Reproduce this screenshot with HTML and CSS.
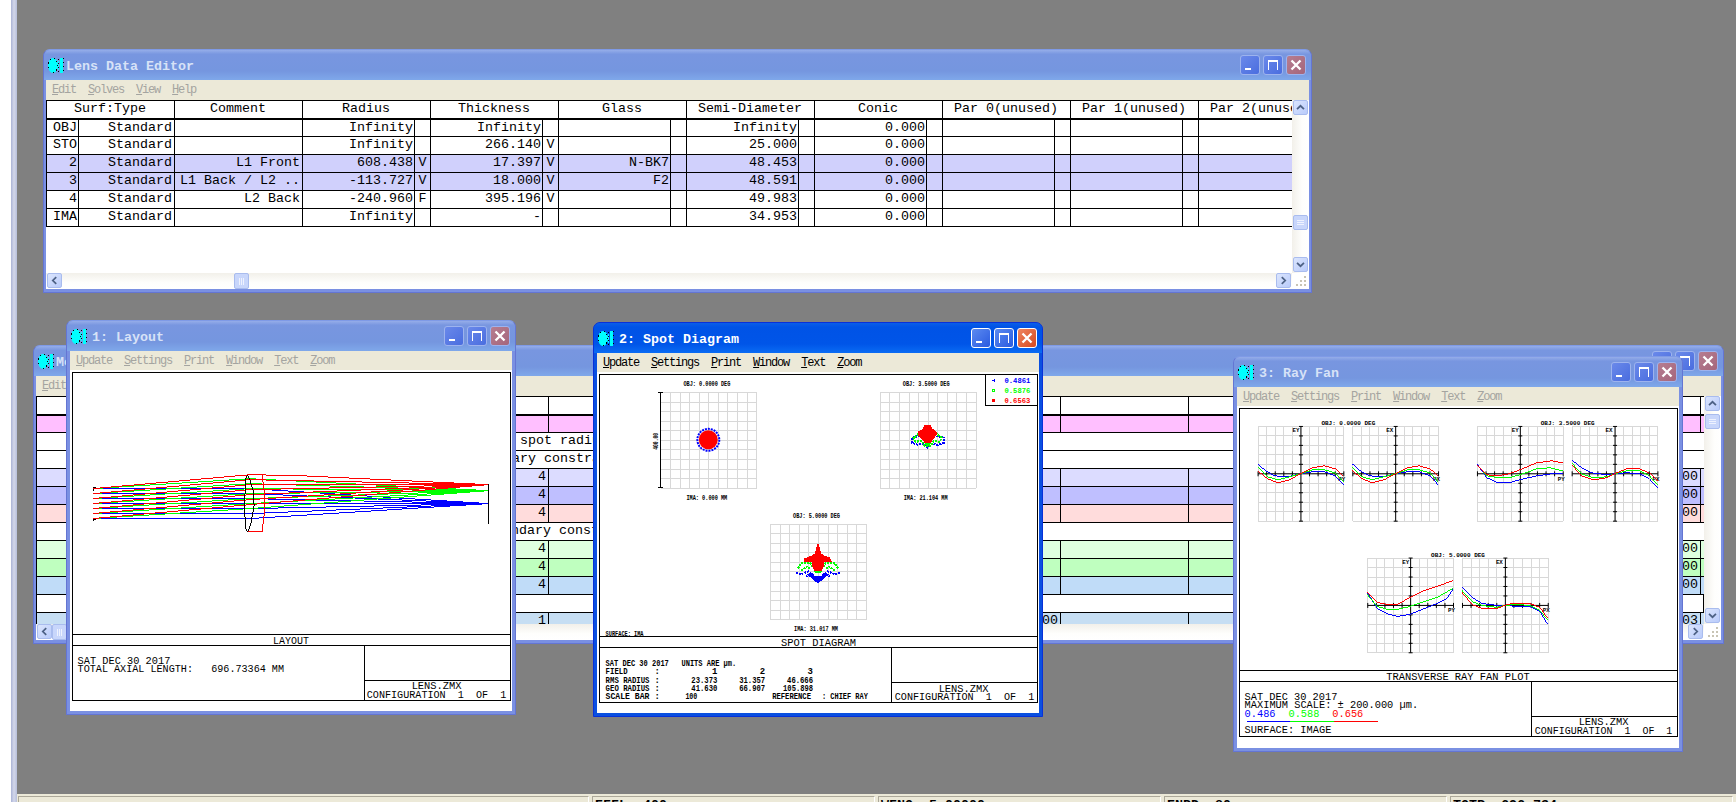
FILE: index.html

```html
<!DOCTYPE html>
<html lang="en">
<head>
  <meta charset="UTF-8" />
  <title>Lens</title>
  <link rel="stylesheet" href="styles.css">
</head>
<body>

  <svg class="defs" width="0" height="0">
    <symbol id="zmx" viewBox="0 0 16 15">
      <ellipse class="cy" cx="5" cy="7.5" rx="5" ry="7.5" />
      <path class="cy" d="M10,3H11V12H10ZM12,0H15V15H12Z" />
      <ellipse class="dots" cx="5" cy="7.5" rx="4.5" ry="7" />
      <path class="dots" d="M10.5,1V15M15.5,0V15" />
    </symbol>
    <symbol id="min" viewBox="0 0 20 20"><path class="wf" d="M4,13H11V16H4Z" /></symbol>
    <symbol id="max" viewBox="0 0 20 20"><path class="wf" d="M4,4H15V16H4ZM5,7V15H14V7Z" /></symbol>
    <symbol id="close" viewBox="0 0 20 20"><path class="ws" d="M5,5L15,15M15,5L5,15" /></symbol>
    <symbol id="up" viewBox="0 0 15 15"><path class="chev" d="M3.5,9.5L7.5,5.5L11.5,9.5" /></symbol>
    <symbol id="down" viewBox="0 0 15 15"><path class="chev" d="M3.5,5.5L7.5,9.5L11.5,5.5" /></symbol>
    <symbol id="left" viewBox="0 0 15 15"><path class="chev" d="M9.5,3.5L5.5,7.5L9.5,11.5" /></symbol>
    <symbol id="right" viewBox="0 0 15 15"><path class="chev" d="M5.5,3.5L9.5,7.5L5.5,11.5" /></symbol>
    <symbol id="gripper" viewBox="0 0 17 16"><path class="griptex" d="M12,3h2v2h-2zM8,7h2v2H8zM12,7h2v2h-2zM4,11h2v2H4zM8,11h2v2H8zM12,11h2v2h-2z" /></symbol>
    <g id="spotgrid">
      <path class="gridline" d="M0,0V96M9.6,0V96M19.2,0V96M28.8,0V96M38.4,0V96M48,0V96M57.6,0V96M67.2,0V96M76.8,0V96M86.4,0V96M96,0V96M0,0H96M0,9.6H96M0,19.2H96M0,28.8H96M0,38.4H96M0,48H96M0,57.6H96M0,67.2H96M0,76.8H96M0,86.4H96M0,96H96" />
    </g>
    <g id="fan">
      <path class="gridline" d="M0,0V95M8.6,0V95M17.2,0V95M25.8,0V95M34.4,0V95M43,0V95M51.6,0V95M60.2,0V95M68.8,0V95M77.4,0V95M86,0V95M0,0H86M0,9.5H86M0,19H86M0,28.5H86M0,38H86M0,47.5H86M0,57H86M0,66.5H86M0,76H86M0,85.5H86M0,95H86" />
      <path class="ink" d="M43,0V95M0,47.5H86M41,0H45M41,9.5H45M41,19H45M41,28.5H45M41,38H45M41,57H45M41,66.5H45M41,76H45M41,85.5H45M41,95H45M0,45V50M8.6,45V50M17.2,45V50M25.8,45V50M34.4,45V50M51.6,45V50M60.2,45V50M68.8,45V50M77.4,45V50M86,45V50" />
    </g>
  </svg>

  <div class="side"></div>

  <div class="main">
    <div class="desktop"></div>
    <div class="status">
      <div class="pane pane-wide"></div>
      <div class="pane">EFFL: 400</div>
      <div class="pane">WFNO: 5.00000</div>
      <div class="pane">ENPD: 80</div>
      <div class="pane">TOTR: 696.734</div>
    </div>
  </div>

  <!-- merit function editor, mostly hidden behind the analysis windows -->
  <div class="win win-merit">
    <div class="title">
      <svg class="ico"><use href="#zmx" /></svg>
      <span class="caption">Merit Function Editor</span>
      <div class="btns">
        <span class="btn"><svg><use href="#min" /></svg></span>
        <span class="btn"><svg><use href="#max" /></svg></span>
        <span class="btn btn-close"><svg><use href="#close" /></svg></span>
      </div>
    </div>
    <div class="menu menu-tall"><span><u>E</u>dit</span></div>
    <div class="client">
      <div class="sheet">
        <table class="grid grid-merit">
          <colgroup><col class="w512"><col class="w512"><col class="w128"><col class="w128"><col class="w128"><col class="w128"><col class="w128"><col class="w3"></colgroup>
          <tr class="head"><th></th><th></th><th></th><th></th><th></th><th></th><th></th><th class="tail"></th></tr>
          <tr class="first pink"><td></td><td></td><td></td><td></td><td></td><td></td><td></td><td class="tail"></td></tr>
          <tr><td colspan="8" class="note note-a">Sequential merit function: RMS spot radius centroid GQ 4 rings 6 arms</td></tr>
          <tr><td colspan="8" class="note note-b">Default air thickness boundary constraints.</td></tr>
          <tr class="lav"><td>4</td><td></td><td></td><td></td><td></td><td></td><td>00</td><td class="tail"></td></tr>
          <tr class="blu"><td>4</td><td></td><td></td><td></td><td></td><td></td><td>00</td><td class="tail"></td></tr>
          <tr class="rose"><td>4</td><td></td><td></td><td></td><td></td><td></td><td>00</td><td class="tail"></td></tr>
          <tr><td colspan="8" class="note note-c">Default glass thickness boundary constraints.</td></tr>
          <tr class="mint"><td>4</td><td></td><td></td><td></td><td></td><td></td><td>00</td><td class="tail"></td></tr>
          <tr class="grn"><td>4</td><td></td><td></td><td></td><td></td><td></td><td>00</td><td class="tail"></td></tr>
          <tr class="sky"><td>4</td><td></td><td></td><td></td><td></td><td></td><td>00</td><td class="tail"></td></tr>
          <tr><td colspan="8"></td></tr>
          <tr class="sky2"><td>1</td><td>00</td><td></td><td></td><td></td><td></td><td>03</td><td class="tail"></td></tr>
        </table>
      </div>
      <div class="vbar">
        <span class="sb sb-top"><svg><use href="#up" /></svg></span>
        <span class="thumb thumb-v thumb-merit-v"></span>
        <span class="sb sb-end"><svg><use href="#down" /></svg></span>
      </div>
      <div class="hbar">
        <span class="sb"><svg><use href="#left" /></svg></span>
        <span class="thumb thumb-h"></span>
        <span class="sb sb-end"><svg><use href="#right" /></svg></span>
      </div>
      <svg class="gripper"><use href="#gripper" /></svg>
    </div>
  </div>

  <!-- lens data editor -->
  <div class="win win-lde">
    <div class="title">
      <svg class="ico"><use href="#zmx" /></svg>
      <span class="caption">Lens Data Editor</span>
      <div class="btns">
        <span class="btn"><svg><use href="#min" /></svg></span>
        <span class="btn"><svg><use href="#max" /></svg></span>
        <span class="btn btn-close"><svg><use href="#close" /></svg></span>
      </div>
    </div>
    <div class="menu menu-tall">
      <span><u>E</u>dit</span><span><u>S</u>olves</span><span><u>V</u>iew</span><span><u>H</u>elp</span>
    </div>
    <div class="client">
      <div class="sheet">
        <table class="grid grid-lde">
          <colgroup><col class="w32"><col class="w96"><col class="w128"><col class="w112"><col class="w16"><col class="w112"><col class="w16"><col class="w112"><col class="w16"><col class="w112"><col class="w16"><col class="w112"><col class="w16"><col class="w112"><col class="w16"><col class="w112"><col class="w16"><col class="w112"><col class="w16"></colgroup>
          <tr class="head">
            <th colspan="2">Surf:Type</th><th>Comment</th><th colspan="2">Radius</th><th colspan="2">Thickness</th><th colspan="2">Glass</th><th colspan="2">Semi-Diameter</th><th colspan="2">Conic</th><th colspan="2">Par 0(unused)</th><th colspan="2">Par 1(unused)</th><th colspan="2">Par 2(unused)</th>
          </tr>
          <tr class="first">
            <td>OBJ</td><td>Standard</td><td></td><td>Infinity</td><td class="flag"></td><td>Infinity</td><td class="flag"></td><td></td><td class="flag"></td><td>Infinity</td><td class="flag"></td><td>0.000</td><td class="flag"></td><td></td><td class="flag"></td><td></td><td class="flag"></td><td></td><td class="flag"></td>
          </tr>
          <tr>
            <td>STO</td><td>Standard</td><td></td><td>Infinity</td><td class="flag"></td><td>266.140</td><td class="flag">V</td><td></td><td class="flag"></td><td>25.000</td><td class="flag"></td><td>0.000</td><td class="flag"></td><td></td><td class="flag"></td><td></td><td class="flag"></td><td></td><td class="flag"></td>
          </tr>
          <tr class="sel">
            <td>2</td><td>Standard</td><td>L1 Front</td><td>608.438</td><td class="flag">V</td><td>17.397</td><td class="flag">V</td><td>N-BK7</td><td class="flag"></td><td>48.453</td><td class="flag"></td><td>0.000</td><td class="flag"></td><td></td><td class="flag"></td><td></td><td class="flag"></td><td></td><td class="flag"></td>
          </tr>
          <tr class="sel">
            <td>3</td><td>Standard</td><td>L1 Back / L2 ..</td><td>-113.727</td><td class="flag">V</td><td>18.000</td><td class="flag">V</td><td>F2</td><td class="flag"></td><td>48.591</td><td class="flag"></td><td>0.000</td><td class="flag"></td><td></td><td class="flag"></td><td></td><td class="flag"></td><td></td><td class="flag"></td>
          </tr>
          <tr>
            <td>4</td><td>Standard</td><td>L2 Back</td><td>-240.960</td><td class="flag">F</td><td>395.196</td><td class="flag">V</td><td></td><td class="flag"></td><td>49.983</td><td class="flag"></td><td>0.000</td><td class="flag"></td><td></td><td class="flag"></td><td></td><td class="flag"></td><td></td><td class="flag"></td>
          </tr>
          <tr>
            <td>IMA</td><td>Standard</td><td></td><td>Infinity</td><td class="flag"></td><td>-</td><td class="flag"></td><td></td><td class="flag"></td><td>34.953</td><td class="flag"></td><td>0.000</td><td class="flag"></td><td></td><td class="flag"></td><td></td><td class="flag"></td><td></td><td class="flag"></td>
          </tr>
        </table>
      </div>
      <div class="vbar">
        <span class="sb sb-top"><svg><use href="#up" /></svg></span>
        <span class="thumb thumb-v thumb-lde-v"></span>
        <span class="sb sb-end"><svg><use href="#down" /></svg></span>
      </div>
      <div class="hbar">
        <span class="sb"><svg><use href="#left" /></svg></span>
        <span class="thumb thumb-h thumb-lde-h"></span>
        <span class="sb sb-end"><svg><use href="#right" /></svg></span>
      </div>
      <svg class="gripper"><use href="#gripper" /></svg>
    </div>
  </div>

  <!-- 1: layout. the plots use page coordinates in their viewBox -->
  <div class="win plotwin win-layout">
    <div class="title">
      <svg class="ico"><use href="#zmx" /></svg>
      <span class="caption">1: Layout</span>
      <div class="btns">
        <span class="btn"><svg><use href="#min" /></svg></span>
        <span class="btn"><svg><use href="#max" /></svg></span>
        <span class="btn btn-close"><svg><use href="#close" /></svg></span>
      </div>
    </div>
    <div class="menu">
      <span><u>U</u>pdate</span><span><u>S</u>ettings</span><span><u>P</u>rint</span><span><u>W</u>indow</span><span><u>T</u>ext</span><span><u>Z</u>oom</span>
    </div>
    <svg class="plot" viewBox="70 369 442 342">
      <rect class="frame" x="71.5" y="371.5" width="440" height="329" />
      <path class="ink" d="M71.5,634.5H511.5M71.5,645.5H511.5M364.5,645.5V700.5M364.5,680.5H511.5" />

      <path class="ink" d="M92.5,487V490M92.5,517V520M92.5,487H95M92.5,519H95M489.5,483V523" />

      <polyline class="b" points="98,488 250,488 489,503" />
      <polyline class="b" points="98,493 250,493 489,503" />
      <polyline class="b" points="98,498 250,498 489,503" />
      <polyline class="b" points="98,503 250,503 489,503" />
      <polyline class="b" points="98,508 250,508 489,503" />
      <polyline class="b" points="98,513 250,513 489,503" />
      <polyline class="b" points="98,518 250,518 489,503" />

      <polyline class="g" points="92,488 250,478 489,490" />
      <polyline class="g" points="92,493 250,483 489,490" />
      <polyline class="g" points="92,498 250,488 489,490" />
      <polyline class="g" points="92,503 250,493 489,490" />
      <polyline class="g" points="92,508 250,498 489,490" />
      <polyline class="g" points="92,513 250,503 489,490" />
      <polyline class="g" points="92,518 250,508 489,490" />

      <polyline class="r" points="92,488 250,474 300,475 489,484" />
      <polyline class="r" points="92,493 250,479 489,484" />
      <polyline class="r" points="92,498 250,484 489,484" />
      <polyline class="r" points="92,503 250,489 489,484" />
      <polyline class="r" points="92,508 250,494 489,484" />
      <polyline class="r" points="92,513 250,499 489,484" />
      <polyline class="r" points="92,518 250,504 489,484" />

      <polyline class="ink" points="248,475 246,476 245,490 244.5,505 245,520 246,530 248,531 251,522 254,505 253,490 250,480 248,475" />
      <polyline class="r" points="248,474 262,474 264,490 264.5,502 264,515 262,531 248,531" />

      <text class="t" x="273" y="644" textLength="36" lengthAdjust="spacingAndGlyphs">LAYOUT</text>
      <text class="t" x="77" y="664" textLength="93" lengthAdjust="spacingAndGlyphs">SAT DEC 30 2017</text>
      <text class="t" x="77" y="672" textLength="207" lengthAdjust="spacingAndGlyphs">TOTAL AXIAL LENGTH:   696.73364 MM</text>
      <text class="t" x="412" y="689" textLength="50" lengthAdjust="spacingAndGlyphs">LENS.ZMX</text>
      <text class="t" x="367" y="698" textLength="140" lengthAdjust="spacingAndGlyphs">CONFIGURATION  1  OF  1</text>
    </svg>
  </div>

  <!-- 3: ray fan -->
  <div class="win plotwin win-fan">
    <div class="title">
      <svg class="ico"><use href="#zmx" /></svg>
      <span class="caption">3: Ray Fan</span>
      <div class="btns">
        <span class="btn"><svg><use href="#min" /></svg></span>
        <span class="btn"><svg><use href="#max" /></svg></span>
        <span class="btn btn-close"><svg><use href="#close" /></svg></span>
      </div>
    </div>
    <div class="menu">
      <span><u>U</u>pdate</span><span><u>S</u>ettings</span><span><u>P</u>rint</span><span><u>W</u>indow</span><span><u>T</u>ext</span><span><u>Z</u>oom</span>
    </div>
    <svg class="plot" viewBox="1237 405 442 343">
      <rect class="frame" x="1238.5" y="407.5" width="440" height="329" />
      <path class="ink" d="M1238.5,670.5H1678.5M1238.5,681.5H1678.5M1531.5,681.5V736.5M1531.5,716.5H1678.5" />

      <text class="s6" x="1321" y="424" textLength="54" lengthAdjust="spacingAndGlyphs">OBJ: 0.0000 DEG</text>
      <text class="s6" x="1541" y="424" textLength="54" lengthAdjust="spacingAndGlyphs">OBJ: 3.5000 DEG</text>
      <text class="s6" x="1431" y="556" textLength="54" lengthAdjust="spacingAndGlyphs">OBJ: 5.0000 DEG</text>

      <use href="#fan" x="1257.5" y="425.5" />
      <use href="#fan" x="1352.5" y="425.5" />
      <use href="#fan" x="1477.5" y="425.5" />
      <use href="#fan" x="1572.5" y="425.5" />
      <use href="#fan" x="1367.5" y="557.5" />
      <use href="#fan" x="1462.5" y="557.5" />

      <text class="s6" x="1292" y="431" textLength="7" lengthAdjust="spacingAndGlyphs">EY</text>
      <text class="s6" x="1386" y="431" textLength="7" lengthAdjust="spacingAndGlyphs">EX</text>
      <text class="s6" x="1512" y="431" textLength="7" lengthAdjust="spacingAndGlyphs">EY</text>
      <text class="s6" x="1606" y="431" textLength="7" lengthAdjust="spacingAndGlyphs">EX</text>
      <text class="s6" x="1402" y="563" textLength="7" lengthAdjust="spacingAndGlyphs">EY</text>
      <text class="s6" x="1496" y="563" textLength="7" lengthAdjust="spacingAndGlyphs">EX</text>
      <text class="s6" x="1338" y="480" textLength="7" lengthAdjust="spacingAndGlyphs">PY</text>
      <text class="s6" x="1433" y="480" textLength="7" lengthAdjust="spacingAndGlyphs">PX</text>
      <text class="s6" x="1558" y="480" textLength="7" lengthAdjust="spacingAndGlyphs">PY</text>
      <text class="s6" x="1653" y="480" textLength="7" lengthAdjust="spacingAndGlyphs">PX</text>
      <text class="s6" x="1448" y="612" textLength="7" lengthAdjust="spacingAndGlyphs">PY</text>
      <text class="s6" x="1543" y="612" textLength="7" lengthAdjust="spacingAndGlyphs">PX</text>

      <g transform="translate(1257 473)">
        <polyline class="b" points="0,-10 8,-3 17,2 30,3 43,0 55,-2 67,-2 78,2 86,11" />
        <polyline class="g" points="0,-7 10,3 20,6 32,3 43,0 55,-4 67,-4 78,-1 86,8" />
        <polyline class="r" points="0,-3 10,5 20,9 32,6 43,0 55,-6 67,-8 78,-5 86,2" />
      </g>
      <g transform="translate(1352 473)">
        <polyline class="b" points="0,-10 8,-3 17,2 30,3 43,0 55,-2 67,-2 78,2 86,11" />
        <polyline class="g" points="0,-7 10,3 20,6 32,3 43,0 55,-4 67,-4 78,-1 86,8" />
        <polyline class="r" points="0,-3 10,5 20,9 32,6 43,0 55,-6 67,-8 78,-5 86,2" />
      </g>
      <g transform="translate(1477 473)">
        <polyline class="b" points="0,-10 10,4 21,9 32,9 43,6 60,2 75,0 86,0" />
        <polyline class="g" points="0,-9 10,2 22,4 32,4 43,1 60,-5 73,-6 86,-3" />
        <polyline class="r" points="0,-9 10,1 20,2 32,0 43,-4 60,-11 75,-13 86,-11" />
      </g>
      <g transform="translate(1572 473)">
        <polyline class="b" points="0,-14 10,-6 20,-1 35,1 43,0 55,-1 68,0 78,5 86,14" />
        <polyline class="g" points="0,-11 10,0 22,4 35,3 43,0 55,-3 68,-3 78,2 86,11" />
        <polyline class="r" points="0,-9 10,2 22,6 35,4 43,0 55,-5 68,-5 78,-1 86,7" />
      </g>
      <g transform="translate(1367 605)">
        <polyline class="b" points="0,-13 10,3 22,9 30,11 43,9 55,4 70,-2 80,-7 86,-16" />
        <polyline class="g" points="0,-11 10,1 20,4 30,4 43,1 55,-3 70,-8 86,-17" />
        <polyline class="r" points="0,-13 10,-3 20,-1 30,-1 43,-8 55,-14 70,-19 86,-25" />
      </g>
      <g transform="translate(1462 605)">
        <polyline class="b" points="0,-18 10,-8 20,-2 35,0 43,0 55,1 68,1 78,6 86,19" />
        <polyline class="g" points="0,-15 10,-4 20,0 35,2 43,0 55,-1 68,0 78,5 86,15" />
        <polyline class="r" points="0,-13 10,-1 20,3 35,3 43,0 50,-2 68,-2 78,2 86,13" />
      </g>

      <text class="t" x="1386" y="680" textLength="144" lengthAdjust="spacingAndGlyphs">TRANSVERSE RAY FAN PLOT</text>
      <text class="t" x="1244" y="700" textLength="93" lengthAdjust="spacingAndGlyphs">SAT DEC 30 2017</text>
      <text class="t" x="1244" y="708" textLength="174" lengthAdjust="spacingAndGlyphs">MAXIMUM SCALE: ± 200.000 µm.</text>
      <text class="t fb" x="1244" y="717" textLength="31" lengthAdjust="spacingAndGlyphs">0.486</text>
      <text class="t fg" x="1288" y="717" textLength="31" lengthAdjust="spacingAndGlyphs">0.588</text>
      <text class="t fr" x="1332" y="717" textLength="31" lengthAdjust="spacingAndGlyphs">0.656</text>
      <path class="b" d="M1246,721.5H1290" />
      <path class="g" d="M1290,721.5H1334" />
      <path class="r" d="M1334,721.5H1378" />
      <text class="t" x="1244" y="733" textLength="87" lengthAdjust="spacingAndGlyphs">SURFACE: IMAGE</text>
      <text class="t" x="1579" y="725" textLength="50" lengthAdjust="spacingAndGlyphs">LENS.ZMX</text>
      <text class="t" x="1535" y="734" textLength="138" lengthAdjust="spacingAndGlyphs">CONFIGURATION  1  OF  1</text>
    </svg>
  </div>

  <!-- 2: spot diagram, the active window -->
  <div class="win plotwin win-active win-spot">
    <div class="title">
      <svg class="ico"><use href="#zmx" /></svg>
      <span class="caption">2: Spot Diagram</span>
      <div class="btns">
        <span class="btn"><svg><use href="#min" /></svg></span>
        <span class="btn"><svg><use href="#max" /></svg></span>
        <span class="btn btn-close"><svg><use href="#close" /></svg></span>
      </div>
    </div>
    <div class="menu">
      <span><u>U</u>pdate</span><span><u>S</u>ettings</span><span><u>P</u>rint</span><span><u>W</u>indow</span><span><u>T</u>ext</span><span><u>Z</u>oom</span>
    </div>
    <svg class="plot" viewBox="597 371 442 342">
      <rect class="frame" x="598.5" y="373.5" width="440" height="329" />
      <path class="ink" d="M598.5,636.5H1038.5M598.5,647.5H1038.5M891.5,647.5V702.5M891.5,682.5H1038.5M985.5,373.5V404.5H1038.5" />

      <use href="#spotgrid" x="660.5" y="391.5" />
      <use href="#spotgrid" x="880.5" y="391.5" />
      <use href="#spotgrid" x="770.5" y="523.5" />

      <path class="ink" d="M660.5,391V487M658,391.5H663M658,486.5H663" />
      <text class="s8" transform="rotate(-90 658 449)" x="658" y="449" textLength="17" lengthAdjust="spacingAndGlyphs">400.00</text>

      <text class="s8" x="683" y="385" textLength="47" lengthAdjust="spacingAndGlyphs">OBJ: 0.0000 DEG</text>
      <text class="s8" x="903" y="385" textLength="47" lengthAdjust="spacingAndGlyphs">OBJ: 3.5000 DEG</text>
      <text class="s8" x="793" y="517" textLength="47" lengthAdjust="spacingAndGlyphs">OBJ: 5.0000 DEG</text>
      <text class="s8" x="686" y="499" textLength="41" lengthAdjust="spacingAndGlyphs">IMA: 0.000 MM</text>
      <text class="s8" x="904" y="499" textLength="44" lengthAdjust="spacingAndGlyphs">IMA: 21.104 MM</text>
      <text class="s8" x="794" y="631" textLength="44" lengthAdjust="spacingAndGlyphs">IMA: 31.017 MM</text>
      <text class="s8" x="605" y="636" textLength="38" lengthAdjust="spacingAndGlyphs">SURFACE: IMA</text>

      <path class="fb" d="M993,379h2v-1h1v3h-1v-1h-2z" />
      <path class="fg" d="M993,388h3v3h-3zM994,389v1h1v-1z" />
      <path class="fr" d="M993,398h3v3h-3z" />
      <text class="s8 fb" x="1005" y="382" textLength="26" lengthAdjust="spacingAndGlyphs">0.4861</text>
      <text class="s8 fg" x="1005" y="392" textLength="26" lengthAdjust="spacingAndGlyphs">0.5876</text>
      <text class="s8 fr" x="1005" y="402" textLength="26" lengthAdjust="spacingAndGlyphs">0.6563</text>

      <!-- spots, field 1 -->
      <circle class="ring" cx="708" cy="439" r="11" />
      <circle class="fr" cx="708" cy="439" r="9.5" />

      <!-- field 2 -->
      <polyline class="spot-b" points="923,434 912,437 912,442 918,444 924,443 928,447 932,443 938,444 944,442 944,437 934,434" />
      <polygon class="fb" points="926,444 930,444 928,448" />
      <polyline class="spot-g" points="919,433 914,437 916,441 922,440 925,445 931,445 934,440 940,441 942,437 937,433" />
      <polygon class="fg" points="924,441 932,441 930,445 926,445" />
      <polygon class="fr" points="925,424 931,424 933,428 937,431 937,434 934,438 931,442 925,442 922,438 918,434 918,431 923,428" />

      <!-- field 3 -->
      <polyline class="spot-b" points="796,572 801,574 808,571 811,574 806,576" />
      <polyline class="spot-b" points="840,572 835,574 828,571 825,574 830,576" />
      <polygon class="fb" points="807,574 812,572 815,576 821,576 824,572 829,574 822,580 818,583 814,580" />
      <polyline class="spot-g" points="798,568 801,563 810,562 813,567 817,570 823,567 826,562 835,563 838,568" />
      <polyline class="spot-g" points="801,570 807,566 811,569" />
      <polyline class="spot-g" points="835,570 829,566 825,569" />
      <polygon class="fg" points="813,566 823,566 821,573 815,573" />
      <polygon class="fr" points="817,544 819,544 821,553 824,555 830,557 832,562 824,562 824,566 821,571 815,571 812,566 812,562 804,562 804,558 812,555 815,553" />

      <text class="t" x="781" y="646" textLength="75" lengthAdjust="spacingAndGlyphs">SPOT DIAGRAM</text>
      <text class="s9" x="605" y="666" textLength="131" lengthAdjust="spacingAndGlyphs">SAT DEC 30 2017   UNITS ARE µm.</text>
      <text class="s9" x="605" y="674" textLength="22" lengthAdjust="spacingAndGlyphs">FIELD</text>
      <text class="s9" x="605" y="683" textLength="44" lengthAdjust="spacingAndGlyphs">RMS RADIUS</text>
      <text class="s9" x="605" y="691" textLength="44" lengthAdjust="spacingAndGlyphs">GEO RADIUS</text>
      <text class="s9" x="605" y="699" textLength="44" lengthAdjust="spacingAndGlyphs">SCALE BAR</text>
      <text class="s9" x="654" y="674">:</text>
      <text class="s9" x="654" y="683">:</text>
      <text class="s9" x="654" y="691">:</text>
      <text class="s9" x="654" y="699">:</text>
      <text class="s9 end" x="717" y="674">1</text>
      <text class="s9 end" x="765" y="674">2</text>
      <text class="s9 end" x="813" y="674">3</text>
      <text class="s9" x="691" y="683" textLength="26" lengthAdjust="spacingAndGlyphs">23.373</text>
      <text class="s9" x="739" y="683" textLength="26" lengthAdjust="spacingAndGlyphs">31.357</text>
      <text class="s9" x="787" y="683" textLength="26" lengthAdjust="spacingAndGlyphs">46.666</text>
      <text class="s9" x="691" y="691" textLength="26" lengthAdjust="spacingAndGlyphs">41.630</text>
      <text class="s9" x="739" y="691" textLength="26" lengthAdjust="spacingAndGlyphs">66.907</text>
      <text class="s9" x="783" y="691" textLength="30" lengthAdjust="spacingAndGlyphs">105.898</text>
      <text class="s9" x="685" y="699" textLength="12" lengthAdjust="spacingAndGlyphs">100</text>
      <text class="s9" x="772" y="699" textLength="39" lengthAdjust="spacingAndGlyphs">REFERENCE</text>
      <text class="s9" x="822" y="699" textLength="46" lengthAdjust="spacingAndGlyphs">: CHIEF RAY</text>
      <text class="t" x="939" y="692" textLength="50" lengthAdjust="spacingAndGlyphs">LENS.ZMX</text>
      <text class="t" x="895" y="700" textLength="140" lengthAdjust="spacingAndGlyphs">CONFIGURATION  1  OF  1</text>
    </svg>
  </div>

</body>
</html>
```

FILE: styles.css

```css
html, body { margin: 0; height: 100%; }
body { position: relative; display: flex; height: 802px; overflow: hidden; background: #fff; font-family: "Liberation Mono", monospace; }

.defs { position: absolute; }
.cy { fill: #00ffff; }
.dots { fill: none; stroke: #000; stroke-width: 1; stroke-dasharray: 1 3; shape-rendering: crispEdges; }
.wf { fill: #fff; fill-rule: evenodd; shape-rendering: crispEdges; }
.ws { fill: none; stroke: #fff; stroke-width: 2.6; }
.chev { fill: none; stroke: #4d6185; stroke-width: 2; }
.griptex { fill: #c8c4b4; }

.side { width: 6px; margin-left: 11px; background: linear-gradient(90deg, #aab3d6, #d3d7ea 50%, #b7bfdc); flex: none; }
.main { flex: 1; display: flex; flex-direction: column; min-width: 0; }
.desktop { flex: 1; background: #808080; }
.status { height: 8px; display: flex; gap: 3px; padding: 2px 3px 0 1px; box-sizing: border-box; background: #ece9d8; }
.pane { flex: 1; box-sizing: border-box; border-top: 1px solid #aca899; border-left: 1px solid #aca899; border-right: 1px solid #fff; padding: 2px 0 0 2px; overflow: hidden; font-size: 13.33px; line-height: 13px; font-weight: bold; color: #000; white-space: nowrap; }
.pane-wide { flex: none; width: 571px; }

/* windows sit on a free desktop */
.win { position: absolute; box-sizing: border-box; display: flex; flex-direction: column; border: 1px solid #6475d3; border-top-color: #7f9ae6; border-radius: 7px 7px 0 0; padding: 0 2px 3px; background: #7a90e2; }
.plotwin { padding: 0 3px 3px; }
.win-lde { left: 43px; top: 49px; width: 1269px; height: 244px; }
.win-merit { left: 33px; top: 345px; width: 1691px; height: 299px; }
.win-layout { left: 66px; top: 320px; width: 450px; height: 395px; }
.win-spot { left: 593px; top: 322px; width: 450px; height: 395px; }
.win-fan { left: 1233px; top: 356px; width: 450px; height: 396px; }

.title { height: 30px; margin: 0 -2px; display: flex; align-items: center; flex: none; box-sizing: border-box; padding: 0 5px 0 4px; border-radius: 6px 6px 0 0; background: linear-gradient(#95ade9, #7896e0 14%, #7596df 70%, #7fa8ea); }
.plotwin .title { margin: 0 -3px; }
.caption { margin: 2px 0 0 2px; font-size: 13.33px; font-weight: bold; color: #d7e2f7; white-space: pre; }
.win-layout .caption, .win-spot .caption, .win-fan .caption { margin-left: 5px; }
.ico { width: 16px; height: 15px; flex: none; }
.btns { margin-left: auto; display: flex; gap: 3px; }
.btn { width: 20px; height: 20px; box-sizing: border-box; display: block; border: 1px solid #9db3ee; border-radius: 3px; background: linear-gradient(135deg, #6a89ea, #4a6ddf); }
.btn svg { display: block; width: 18px; height: 18px; }
.btn-close { background: linear-gradient(135deg, #b67d90, #a5667c); }

.win-active { background: #0a50e0; border-color: #0831d9; }
.win-active .title { background: linear-gradient(#0a5ee8, #0053e6 14%, #0055e8 70%, #0a6cf4); }
.win-active .caption { color: #fff; }
.win-active .btn { border-color: #fff; background: linear-gradient(135deg, #5c8af0, #2a5be0); }
.win-active .btn-close { background: linear-gradient(135deg, #ee8560, #d8491f); }

.menu { height: 19px; flex: none; box-sizing: border-box; display: flex; gap: 12px; padding: 3px 0 0 6px; background: #ece9d8; font-size: 12px; line-height: 15px; letter-spacing: -1.2px; color: #a4a4a0; white-space: pre; }
.menu-tall { height: 20px; }
.win-active .menu { color: #000; }
.menu u { text-underline-offset: 1px; }

/* spreadsheet windows */
.client { flex: 1; min-height: 0; display: grid; grid-template-columns: 1fr 17px; grid-template-rows: 1fr 16px; background: #fff; }
.sheet { overflow: hidden; min-width: 0; min-height: 0; background: #fff; }
.grid { table-layout: fixed; border-spacing: 0; border-top: 1px solid #000; border-left: 1px solid #000; font-size: 13.33px; color: #000; }
.grid-lde { width: 1281px; }
.grid-merit { width: 1668px; }
.grid th, .grid td { box-sizing: border-box; height: 18px; padding: 0 1px 2px 0; border-right: 1px solid #000; border-bottom: 1px solid #000; font-weight: normal; line-height: 15px; text-align: right; overflow: hidden; white-space: pre; }
.grid .head th { height: 19px; border-bottom-width: 2px; text-align: center; }
.grid .first td { height: 17px; padding-bottom: 1px; }
.grid .flag { text-align: center; padding-right: 0; }
.grid-lde td:nth-child(2), .grid-lde td:nth-child(3) { padding-right: 2px; }
.grid-merit td { padding-right: 2px; }
.grid .tail { border-right: 0; }
.grid .note { border-right: 0; text-align: left; }
.grid .note-a { padding-left: 235px; }
.grid .note-b { padding-left: 259px; }
.grid .note-c { padding-left: 258px; }
.w3 { width: 3px; }
.w16 { width: 16px; }
.w32 { width: 32px; }
.w96 { width: 96px; }
.w112 { width: 112px; }
.w128 { width: 128px; }
.w512 { width: 512px; }
.sel td { background: #d0d0fc; }
.pink td { background: #ffbfff; }
.lav td { background: #dcdcff; }
.blu td { background: #bfbfff; }
.rose td { background: #ffdcdc; }
.mint td { background: #dfffdf; }
.grn td { background: #bfffbf; }
.sky td { background: #c0dcf8; }
.sky2 td { background: #c6def3; }

.hbar { display: flex; min-width: 0; background: linear-gradient(#f2f0ea, #fefefc 60%, #fff); padding-left: 1px; }
.vbar { grid-column: 2; grid-row: 1; display: flex; flex-direction: column; align-items: center; background: linear-gradient(90deg, #f2f0ea, #fefefc 60%, #fff); }
.sb { width: 15px; height: 15px; flex: none; display: block; box-sizing: border-box; border: 1px solid #a9bcee; border-radius: 2px; background: linear-gradient(135deg, #dbe5fd, #b9cbfb); }
.sb svg { display: block; width: 13px; height: 13px; }
.sb-end { margin-left: auto; margin-top: 0; }
.vbar .sb-end { margin: auto 0 1px; }
.hbar .sb-end { margin-right: 1px; }
.thumb { display: block; box-sizing: border-box; border: 1px solid #a9bcee; border-radius: 2px; background-color: #c8d6fb; }
.thumb-v { width: 15px; height: 15px; background-image: repeating-linear-gradient(#c8d6fb 0 1px, #eef2fe 1px 2px); background-size: 7px 7px; background-position: center; background-repeat: no-repeat; }
.thumb-h { width: 15px; background-image: repeating-linear-gradient(90deg, #c8d6fb 0 1px, #eef2fe 1px 2px); background-size: 7px 7px; background-position: center; background-repeat: no-repeat; }
.thumb-lde-h { margin-left: 172px; }
.thumb-lde-v { margin-top: 100px; }
.thumb-merit-v { margin-top: 3px; }
.gripper { width: 17px; height: 16px; }

/* plot canvases: coordinates in each viewBox are page pixels */
.plot { flex: 1; min-height: 0; display: block; width: 442px; background: #fff; }
.plot path, .plot polyline, .plot polygon, .plot rect { shape-rendering: crispEdges; }
.plot polyline { fill: none; }
.plot text { font-family: "Liberation Mono", monospace; white-space: pre; fill: #000; }
.frame { fill: none; stroke: #000; }
.ink { fill: none; stroke: #000; }
.gridline { fill: none; stroke: #d8d8d8; shape-rendering: crispEdges; }
.b { fill: none; stroke: #0000ff; }
.g { fill: none; stroke: #00ff00; }
.r { fill: none; stroke: #ff0000; }
.plot .fb { fill: #0000ff; }
.plot .fg { fill: #00ff00; }
.plot .fr { fill: #ff0000; }
.ring { fill: none; stroke: #0000ff; stroke-width: 2; stroke-dasharray: 2 1; }
.spot-b { fill: none; stroke: #0000ff; stroke-width: 2; stroke-dasharray: 2 1; }
.spot-g { fill: none; stroke: #00ff00; stroke-width: 2; stroke-dasharray: 2 1; }
.t { font-size: 11px; }
.s6 { font-size: 6px; font-weight: bold; }
.s8 { font-size: 8px; font-weight: bold; }
.s9 { font-size: 9px; font-weight: bold; }
.end { text-anchor: end; }
```
